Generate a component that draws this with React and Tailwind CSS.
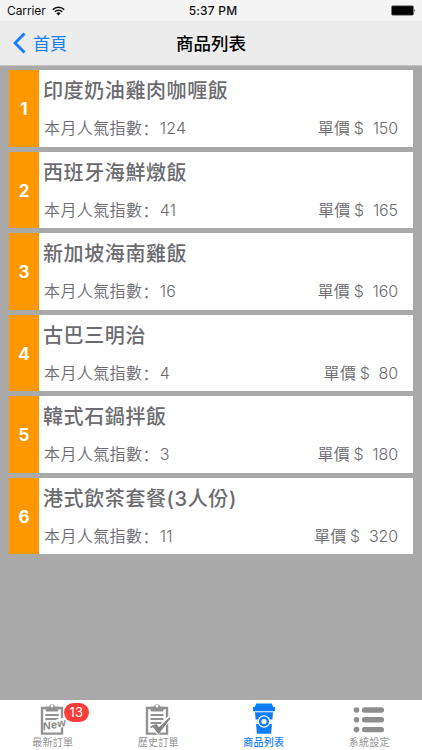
import clsx from 'clsx';

const items = [
  { id: 1, name: '印度奶油雞肉咖喱飯', hits: 124, price: 150 },
  { id: 2, name: '西班牙海鮮燉飯', hits: 41, price: 165 },
  { id: 3, name: '新加坡海南雞飯', hits: 16, price: 160 },
  { id: 4, name: '古巴三明治', hits: 4, price: 80 },
  { id: 5, name: '韓式石鍋拌飯', hits: 3, price: 180 },
  { id: 6, name: '港式飲茶套餐(3人份)', hits: 11, price: 320 },
];

function Clipboard({ children }) {
  return (
    <svg className="overflow-visible" width="28" height="33" viewBox="0 0 28 33" fill="none" stroke="#929292">
      <path d="M7 6H3v25.6h20V6h-4" strokeWidth="2.4" />
      <path d="M7 9V5h3.2a2.9 2.9 0 0 1 5.7 0H19v4z" fill="#929292" />
      <circle cx="13" cy="4" r="1.4" fill="#fff" stroke="none" />
      <path d="M6.5 13h13M6.5 17h13M6.5 21h11M6.5 25h5" strokeWidth="1.8" />
      {children}
    </svg>
  );
}

function NewIcon() {
  return (
    <Clipboard>
      <path d="M5 20.5L27 15v9.5L5 29z" fill="#fff" stroke="none" />
      <path d="M6.5 13h13M6.5 17h11" strokeWidth="1.8" />
      <text x="4.6" y="28.6" transform="rotate(-12 4.6 28.6)" fontFamily="Liberation Sans, sans-serif" fontSize="11" fontWeight="700" fontStyle="italic" fill="#858585" stroke="none">New</text>
    </Clipboard>
  );
}

function HistoryIcon() {
  return (
    <Clipboard>
      <path d="M9 25l5 4.5L25.5 16" stroke="#fff" strokeWidth="5" />
      <path d="M9 24l3.4-1.2 2.2 3.6L25.8 16 14.6 31z" fill="#858585" stroke="#858585" strokeWidth="1.4" />
    </Clipboard>
  );
}

function CupIcon() {
  return (
    <svg width="24" height="33" viewBox="0 0 24 33" fill="#0b7dfb">
      <path d="M4.2 1.5h15.6l1.4 3.5H23v4.2H1V5h1.8z" />
      <path d="M3 10.3h18l-1.9 21.4H4.9z" />
      <path d="M3 17.5h18v4.6H3z" fill="#fff" />
      <circle cx="12" cy="19.5" r="6.2" fill="#fff" />
      <circle cx="12" cy="19.5" r="5" />
      <circle cx="12" cy="19.5" r="2.6" fill="#fff" />
    </svg>
  );
}

function ListIcon() {
  return (
    <svg width="32" height="33" viewBox="0 0 32 33" fill="#8e8e8e">
      <circle cx="3.5" cy="8" r="2.8" />
      <circle cx="3.5" cy="17.8" r="2.8" />
      <circle cx="3.5" cy="27.6" r="2.8" />
      <rect x="9" y="5.3" width="22" height="5.4" rx="2.5" />
      <rect x="9" y="15.1" width="22" height="5.4" rx="2.5" />
      <rect x="9" y="24.9" width="22" height="5.4" rx="2.5" />
    </svg>
  );
}

const tabs = [
  { label: '最新訂單', Icon: NewIcon, badge: 13 },
  { label: '歷史訂單', Icon: HistoryIcon },
  { label: '商品列表', Icon: CupIcon, active: true },
  { label: '系統設定', Icon: ListIcon },
];

function StatusBar() {
  return (
    <div className="h-[21px] bg-[#f4f4f4] grid grid-cols-3 items-center pl-[7px] pr-[6px] text-[12px] leading-[21px] text-[#111]">
      <div className="flex items-center gap-[6px] tracking-[-0.1px]">
        Carrier
        <svg width="13" height="10" viewBox="0 0 13 10" fill="none" stroke="#111" strokeWidth="1.6">
          <path d="M.8 3.6a8.2 8.2 0 0 1 11.4 0M2.8 5.8a5.3 5.3 0 0 1 7.4 0" />
          <path d="M4.4 7.3a3 3 0 0 1 4.2 0L6.5 9.5z" fill="#111" stroke="none" />
        </svg>
      </div>
      <div className="pl-[3px] text-center font-medium tracking-[0.2px]">5:37 PM</div>
      <svg className="justify-self-end" width="25" height="11" viewBox="0 0 25 11">
        <rect x=".5" y=".8" width="22" height="9.4" rx="1.2" fill="#000" stroke="#777" strokeWidth=".6" />
        <path d="M23.5 3.8q1.4 1.7 0 3.4z" fill="#000" />
      </svg>
    </div>
  );
}

function NavBar() {
  return (
    <div className="h-[45px] bg-[#ececec] border-b border-[#c4c4c4] grid grid-cols-3 items-center">
      <div className="flex items-center gap-[7px] pl-[13px] text-[17px] leading-[24px] text-[#157efb]">
        <svg width="13" height="22" viewBox="0 0 13 22" fill="none" stroke="#157efb" strokeWidth="3">
          <path d="M11.5 1.5L2 11l9.5 9.5" />
        </svg>
        <span className="pt-px">首頁</span>
      </div>
      <div className="pt-px text-center text-[17.5px] leading-[24px] font-medium text-black">商品列表</div>
    </div>
  );
}

function Item({ item }) {
  return (
    <div className="flex h-[76.5px] bg-white text-[#6b6b70]">
      <div className="w-[30px] pt-[3px] bg-[#ff9800] flex items-center justify-center text-[17px] font-bold text-white">{item.id}</div>
      <div className="flex-1 flex flex-col pl-[4px] pr-[15px]">
        <div className="h-[41px] text-[20px] leading-[43px] tracking-[0.6px] font-medium">{item.name}</div>
        <div className="flex justify-between text-[16px] leading-[35px] font-[350] whitespace-pre">
          <div className="flex pl-[1px] tracking-[0.4px]">
            本月人氣指數<span className="mr-[1px] font-['Noto_Sans_CJK_SC',sans-serif]" lang="zh-CN">：</span><span className="tracking-[0.1px]">{item.hits}</span>
          </div>
          <div className="tracking-[0.3px]">單價<span className="pl-[3.5px] pr-[4px]">$</span><span className="tracking-[-0.1px]"> {item.price}</span></div>
        </div>
      </div>
    </div>
  );
}

function TabBar() {
  return (
    <div className="h-[50px] bg-white grid grid-cols-4">
      {tabs.map(({ label, Icon, badge, active }) => (
        <div key={label} className={clsx('relative flex flex-col items-center pt-[2px] text-[10px] leading-[12px] tracking-[0.3px]', active ? 'text-[#157efb] font-medium' : 'text-[#929292]')}>
          <Icon />
          <span className="mt-[1px]">{label}</span>
          {badge && (
            <span className="absolute left-[64px] top-[3px] w-[25px] h-[19px] rounded-full bg-[#fc3d39] text-center text-[13px] leading-[19px] text-white">{badge}</span>
          )}
        </div>
      ))}
    </div>
  );
}

export default function App() {
  return (
    <div lang="zh-TW" className="w-full h-screen flex flex-col overflow-hidden bg-[#a9a9a9] font-['Inter','Noto_Sans_CJK_TC',sans-serif]">
      <StatusBar />
      <NavBar />
      <div className="flex-1 flex flex-col gap-[5px] pt-[4.3px] pl-[9px] pr-[9px]">
        {items.map((item) => <Item key={item.id} item={item} />)}
      </div>
      <TabBar />
    </div>
  );
}
